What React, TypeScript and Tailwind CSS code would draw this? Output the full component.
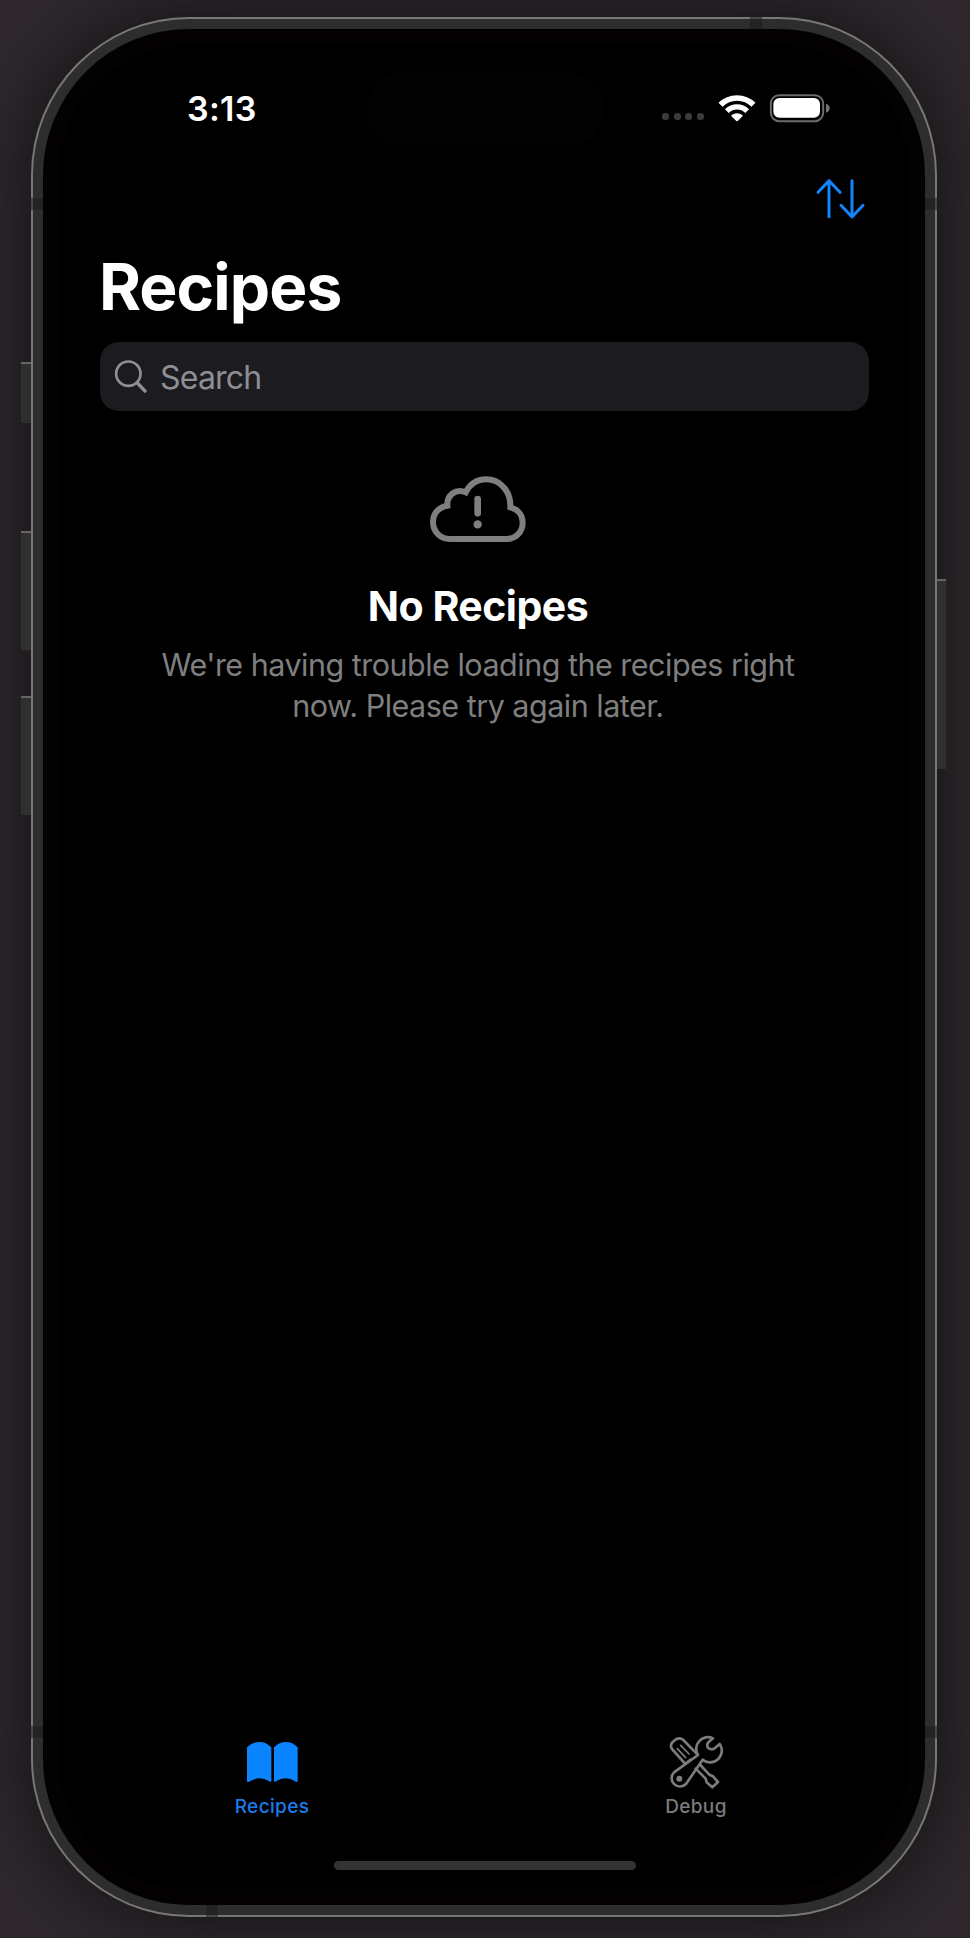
function WifiIcon() {
  return (
    <svg className="ml-[13px] h-[30px] w-[40px]" viewBox="231 37 120 90" fill="none" stroke="#fff">
      <path d="M241.500 72.500A70 70 0 0 1 340.500 72.500" strokeWidth="17" />
      <path d="M260.500 91.500A43 43 0 0 1 321.500 91.500" strokeWidth="16" />
      <path d="M276 105Q291 95 306 105L291 120Z" fill="#fff" strokeWidth="4" strokeLinejoin="round" />
    </svg>
  );
}

function BatteryIcon() {
  return (
    <svg className="ml-[12px] h-[30px] w-[62px]" viewBox="388 38 186 90">
      <rect x="393.500" y="44.500" width="157" height="78" rx="25" fill="none" stroke="#6c6c6c" strokeWidth="6" />
      <rect x="401" y="53" width="140" height="59" rx="18" fill="#fff" />
      <path d="M559 70Q570 74 570 83.500T559 97Z" fill="#747474" />
    </svg>
  );
}

function SortIcon() {
  return (
    <svg className="h-[44px] w-[51px]" viewBox="525 290 153 132" fill="none" stroke="#1583fa" strokeWidth="9" strokeLinecap="round" strokeLinejoin="round">
      <path d="M567 409V301M534 336L567 301L600 336" />
      <path d="M636 301V409M603 375L636 410L669 375" />
    </svg>
  );
}

function SearchIcon() {
  return (
    <svg className="-mt-[1px] h-[34px] w-[34px]" viewBox="101 356 102 102" fill="none" stroke="#8e8e93" strokeLinecap="round">
      <circle cx="144" cy="400" r="36.500" strokeWidth="8" />
      <path d="M171 428L194 452" strokeWidth="10" />
    </svg>
  );
}

function CloudAlertIcon() {
  return (
    <svg className="h-[68px] w-[98px]" viewBox="207 75 294 204" fill="none" stroke="#7f7f7f" strokeWidth="18">
      <path d="M270 267C240 267 219 244 219 216C219 190 237 171 262 167C260 136 287 114 317 127C329 104 350 88 378 88C422 88 453 125 451 172C474 178 488 195 488 218C488 246 467 267 439 267Z" />
      <path d="M353 147V190" strokeWidth="20" strokeLinecap="round" />
      <circle cx="353" cy="223" r="12.500" fill="#7f7f7f" stroke="none" />
    </svg>
  );
}

function BookIcon() {
  return (
    <svg className="h-[44px] w-[53px]" viewBox="78 90 159 132" fill="#0a84ff">
      <path d="M81 112Q97 96 118 96Q138 96 154 112V214Q153 217 148 214Q118 195 87 215Q82 218 81 214Z" />
      <path d="M162 112Q178 96 198 96Q218 96 233 112V214Q232 217 228 215Q197 195 168 214Q163 217 162 214Z" />
    </svg>
  );
}

function ToolsIcon() {
  return (
    <svg className="h-[56px] w-[56px]" viewBox="84 76 168 168" fill="none" stroke="#7c7c7c" strokeWidth="8" strokeLinecap="round" strokeLinejoin="round">
      <path d="M151 150L136 163L97 119Q88 107 98 97L108 89Q120 82 130 91L172 134" />
      <path d="M112 117L137 144M122 107L147 133" strokeWidth="5" />
      <path d="M167 177L197 207L200 218L217 233L234 217L219 200L208 195L181 166" />
      <path d="M219 86A35 35 0 0 0 174 136L102 188A25 25 0 1 0 138 223L188 150A35 35 0 0 0 239 103L222 117Q210 122 203 113Q199 103 206 97Z" />
      <circle cx="118" cy="207" r="9" fill="#7c7c7c" stroke="none" />
    </svg>
  );
}

function Hardware() {
  return (
    <>
      <i className="absolute -left-[10px] top-[345px] h-[61px] w-[10px] border-t-2 border-[#656565] bg-[#2e2e2e]" />
      <i className="absolute -left-[10px] top-[514px] h-[119px] w-[10px] border-t-2 border-[#656565] bg-[#2e2f2e]" />
      <i className="absolute -left-[10px] top-[679px] h-[119px] w-[10px] border-t-2 border-[#656565] bg-[#2e2f2e]" />
      <i className="absolute -right-[9px] top-[562px] h-[190px] w-[9px] border-t-2 border-[#656565] bg-[#2d302e]" />
      <i className="absolute left-0 top-[181px] h-[12px] w-[12px] border-l-2 border-[#474747] bg-[#232323]" />
      <i className="absolute right-0 top-[181px] h-[12px] w-[12px] border-r-2 border-[#474747] bg-[#232323]" />
      <i className="absolute left-0 top-[1709px] h-[12px] w-[12px] border-l-2 border-[#474747] bg-[#232323]" />
      <i className="absolute right-0 top-[1709px] h-[12px] w-[12px] border-r-2 border-[#474747] bg-[#232323]" />
      <i className="absolute left-[719px] top-0 h-[12px] w-[12px] border-t-2 border-[#474747] bg-[#242324]" />
      <i className="absolute bottom-0 left-[175px] h-[12px] w-[12px] border-b-2 border-[#474747] bg-[#242324]" />
    </>
  );
}

export default function App() {
  return (
    <main className="flex h-[1938px] w-[970px] overflow-hidden bg-[#2e282d] pl-[31px] pt-[17px] font-['Inter',sans-serif]">
      <div className="relative h-[1900px] w-[906px] rounded-[158px] bg-[#777777] p-[2px] shadow-[0_0_70px_0_rgba(0,0,0,0.65)]">
        <div className="h-full rounded-[156px] bg-[#2e2d2e] p-[10px]">
          <div className="h-full rounded-[146px] bg-[#030102] p-[16px]">
            <div className="flex h-full flex-col rounded-[130px] bg-black pt-[28px]">
              <header className="flex h-[73px] items-center">
                <time className="-mt-[2px] w-[307px] pl-[128px] text-[34px] font-semibold leading-[40px] tracking-[0.3px] text-white">3:13</time>
                <div className="h-[73px] w-[239px] rounded-full bg-[#020202]" />
                <div className="-mt-[4px] flex items-center pl-[57px]">
                  <div className="mt-[18px] flex gap-[4.500px]">
                    <i className="h-[7px] w-[7px] rounded-[3px] bg-[#3b3b3b]" />
                    <i className="h-[7px] w-[7px] rounded-[3px] bg-[#3b3b3b]" />
                    <i className="h-[7px] w-[7px] rounded-[3px] bg-[#3b3b3b]" />
                    <i className="h-[7px] w-[7px] rounded-[3px] bg-[#3b3b3b]" />
                  </div>
                  <WifiIcon />
                  <BatteryIcon />
                </div>
              </header>
              <nav className="mt-[31px] flex justify-end pr-[43px]">
                <SortIcon />
              </nav>
              <h1 className="ml-[40px] mt-[28px] text-[64px] font-bold leading-[76px] tracking-[-0.900px] text-white">Recipes</h1>
              <label className="ml-[41px] mt-[17px] flex h-[69px] w-[769px] items-center rounded-[19px] bg-[#1c1c20] pl-[14px]">
                <SearchIcon />
                <span className="ml-[12px] mt-[2px] text-[32px] leading-[40px] tracking-[-0.8px] text-[#8e8e93]">Search</span>
              </label>
              <section className="mt-[64px] flex flex-col items-center pr-[12px]">
                <CloudAlertIcon />
                <h2 className="mt-[39px] text-[41px] font-bold leading-[48px] tracking-[-0.500px] text-white">No Recipes</h2>
                <p className="mt-[14px] whitespace-nowrap text-center text-[30.500px] leading-[41px] tracking-[-0.500px] text-[#7f7f7f]">
                  We're having trouble loading the recipes right
                  <br />
                  now. Please try again later.
                </p>
              </section>
              <footer className="mt-auto">
                <nav className="ml-[1px] grid w-[848px] grid-cols-2">
                  <div className="flex flex-col items-center">
                    <div className="flex h-[60px] items-start pt-[5px]">
                      <BookIcon />
                    </div>
                    <span className="text-[19px] font-medium leading-[24px] tracking-[0.350px] text-[#1b7be8]">Recipes</span>
                  </div>
                  <div className="flex flex-col items-center">
                    <div className="flex h-[60px] items-start">
                      <ToolsIcon />
                    </div>
                    <span className="text-[19px] font-medium leading-[24px] tracking-[0.350px] text-[#7c7c7c]">Debug</span>
                  </div>
                </nav>
                <div className="mx-auto mb-[19px] mt-[42px] h-[9px] w-[302px] translate-x-px rounded-full bg-[#333333]" />
              </footer>
            </div>
          </div>
        </div>
        <Hardware />
      </div>
    </main>
  );
}
